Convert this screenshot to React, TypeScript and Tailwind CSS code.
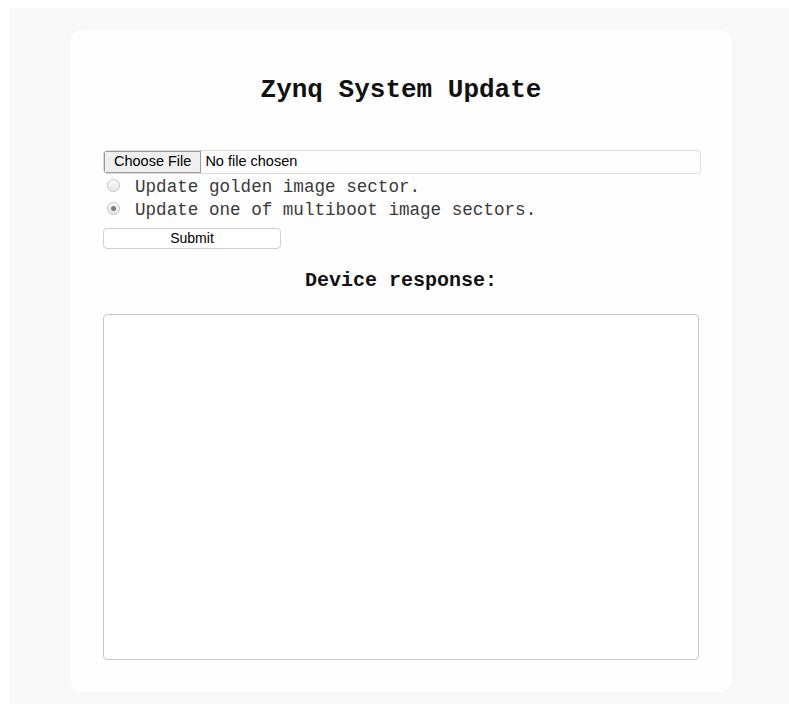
const mono = { fontFamily: '"Liberation Mono", "Courier New", monospace' };
const sans = { fontFamily: '"Liberation Sans", Arial, sans-serif' };

const Radio = ({ checked }: { checked?: boolean }) => (
  <span className="flex h-[13px] w-[13px] items-center justify-center rounded-full border border-[#c4c4c4] bg-gradient-to-b from-[#f9f9f9] to-[#e6e6e6]">
    {checked && <span className="h-[5px] w-[5px] rounded-full bg-[#7d7d7d]" />}
  </span>
);

const App = () => {
  return (
    <div className="min-h-screen bg-white pl-[10px] pt-[8px]">
      <div className="flex min-h-[696px] bg-[#f8f8f8] pl-[60px] pt-[22px] pb-[12px]">
        <div className="flex h-[662px] w-[662px] flex-col rounded-xl bg-[#fefefe] px-[33px]">
          <h1
            className="mt-[45px] text-center text-[26px] font-bold leading-[30px] text-[#111]"
            style={mono}
          >
            Zynq System Update
          </h1>

          <form className="mt-[45px] flex flex-col">
            {/* file picker */}
            <div
              className="flex h-[24px] w-[598px] items-stretch overflow-hidden rounded-[4px] border border-[#dcdcdc] text-[14.5px] text-black"
              style={sans}
            >
              <span className="flex items-center border border-[#9a9a9a] bg-[#efefef] px-[9px]">
                Choose File
              </span>
              <span className="flex items-center px-[4px]">No file chosen</span>
            </div>

            <label
              className="mt-[2px] flex h-[23px] items-center text-[17.6px] text-[#3a3a3a]"
              style={mono}
            >
              <span className="ml-[4px] mr-[15px] -mt-[4px]">
                <Radio />
              </span>
              Update golden image sector.
            </label>
            <label
              className="flex h-[23px] items-center text-[17.6px] text-[#3a3a3a]"
              style={mono}
            >
              <span className="ml-[4px] mr-[15px] -mt-[4px]">
                <Radio checked />
              </span>
              Update one of multiboot image sectors.
            </label>

            <button
              type="button"
              className="mt-[6px] h-[21px] w-[178px] rounded-[4px] border border-[#cfcfcf] bg-white text-[14px] leading-[19px] text-black"
              style={sans}
            >
              Submit
            </button>
          </form>

          <h3
            className="mt-[20px] text-center text-[20px] font-bold leading-[24px] text-[#111]"
            style={mono}
          >
            Device response:
          </h3>

          <textarea
            readOnly
            className="mt-[21px] h-[346px] w-[596px] resize-none rounded-[4px] border border-[#c8c8c8] bg-white"
          />
        </div>
      </div>
    </div>
  );
};

export default App;
